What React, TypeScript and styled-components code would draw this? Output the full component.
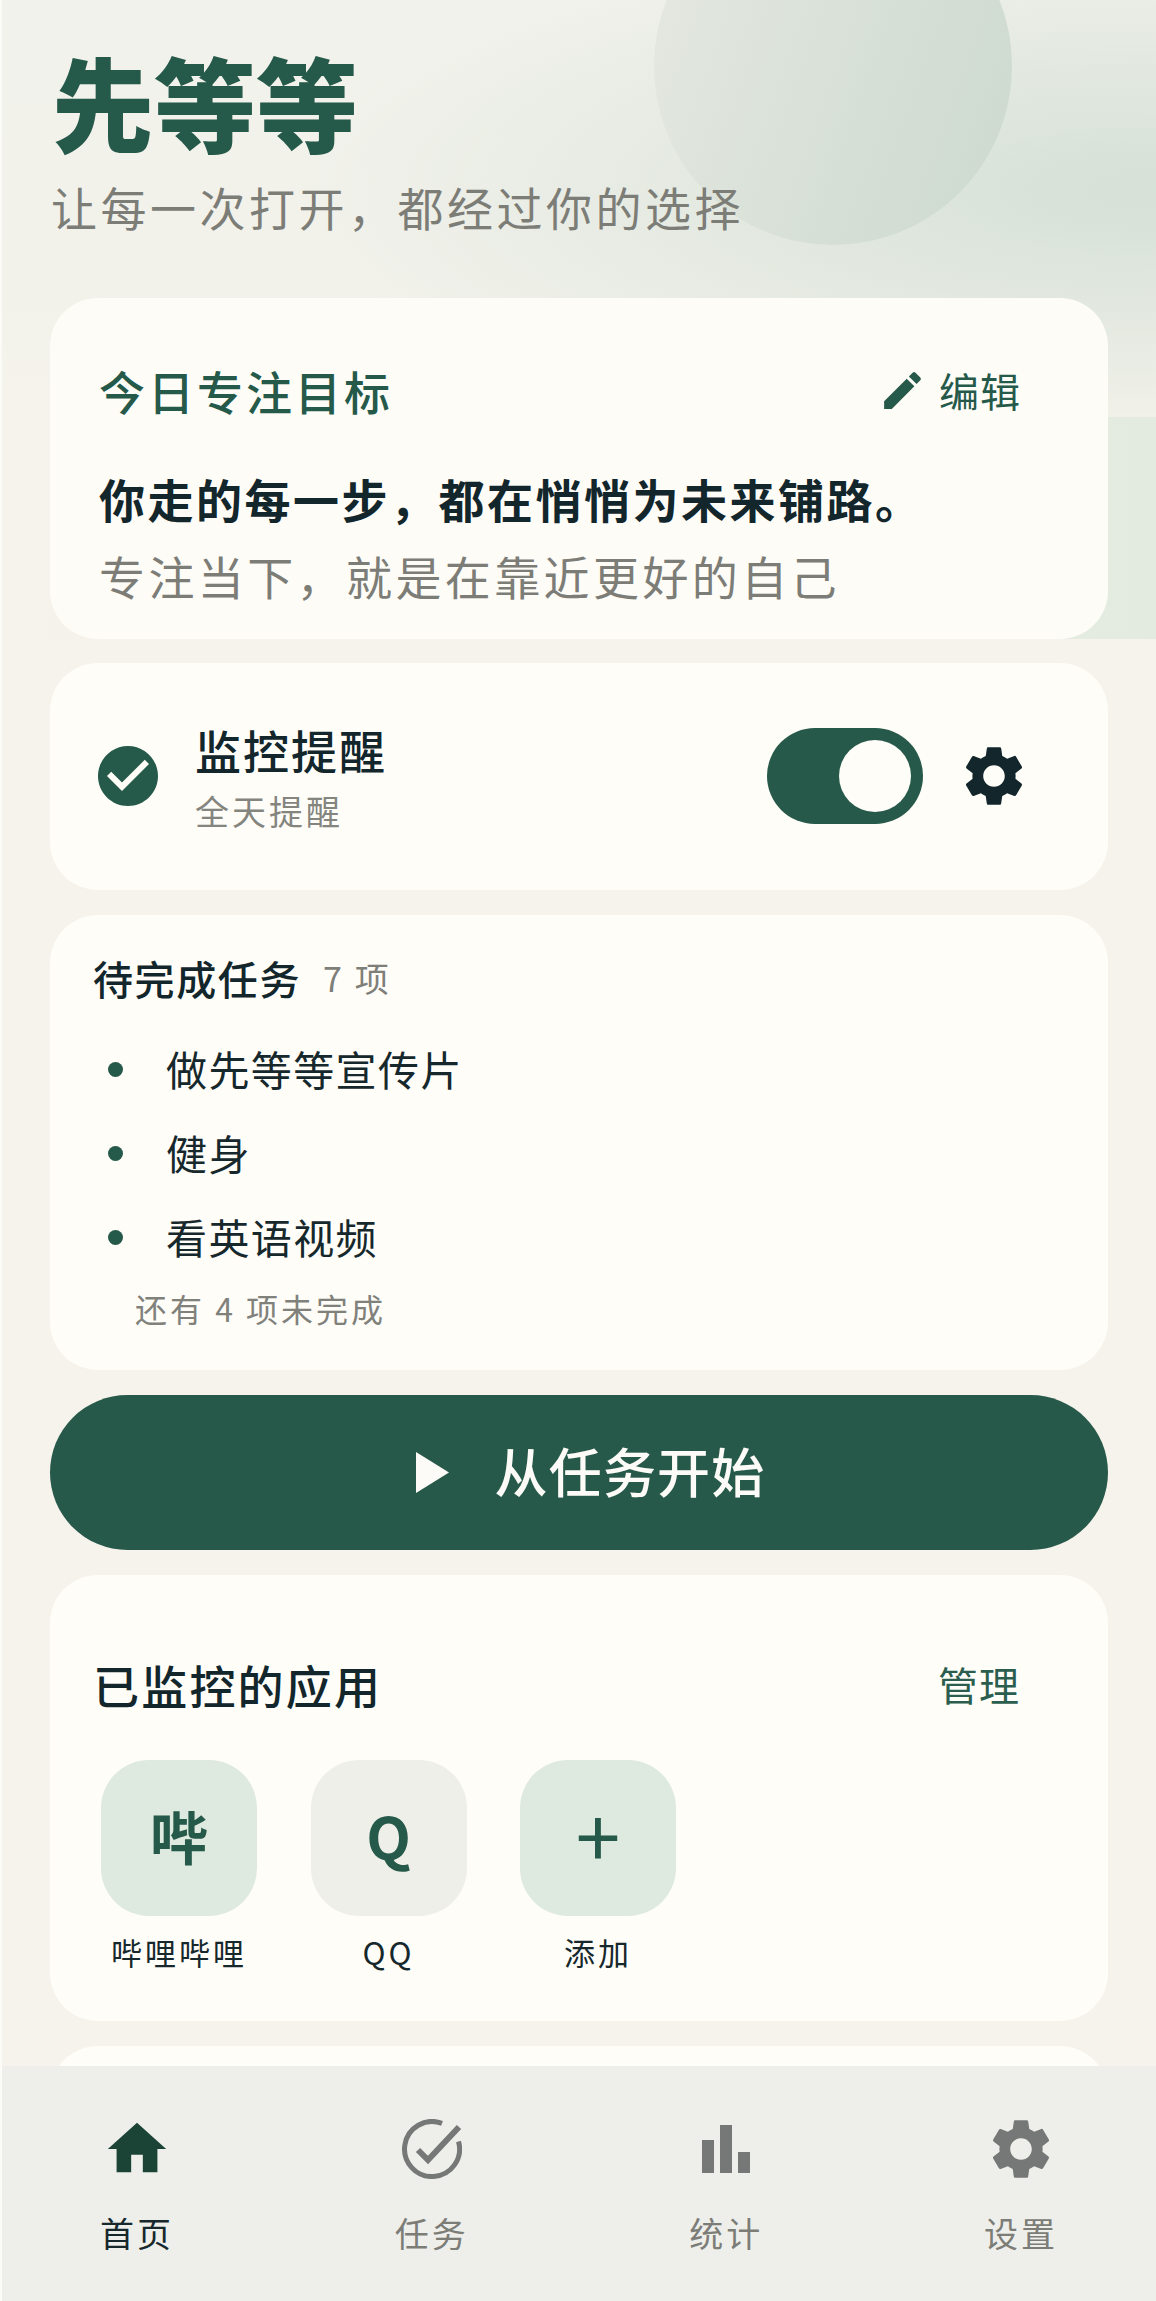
import styled, { createGlobalStyle } from "styled-components";
import { MdCheckCircle, MdEdit, MdHome, MdSettings } from "react-icons/md";

const GlobalStyle = createGlobalStyle`
    html, body {
        margin: 0;
        padding: 0;
        background: #f6f3ec;
    }
    * {
        box-sizing: border-box;
    }
`;

const Page = styled.div`
    position: relative;
    width: 1156px;
    height: 2301px;
    overflow: hidden;
    background: #f6f3ec;
    font-family: "Noto Sans CJK SC", "Noto Sans", sans-serif;
    color: #12262c;

    &::after {
        content: "";
        position: absolute;
        left: 0;
        top: 0;
        bottom: 0;
        width: 2px;
        background: #fbfbf8;
    }
`;

const Backdrop = styled.div`
    position: absolute;
    left: 0;
    top: 0;
    width: 100%;
    height: 639px;
    background:
        radial-gradient(ellipse 860px 260px at 100% 190px, #d5e0d6 0%, rgba(213, 224, 214, 0) 100%) 0 0 / 100% 417px no-repeat,
        linear-gradient(180deg, #f1f2eb 0%, #f2f2eb 70%, #f5f3ec 100%) 0 0 / 100% 417px no-repeat,
        linear-gradient(90deg, #f6f3ec 0%, #e3ebe1 100%) 0 417px / 100% 222px no-repeat;
`;

const Orb = styled.div`
    position: absolute;
    left: 654px;
    top: -113px;
    width: 358px;
    height: 358px;
    border-radius: 50%;
    background: linear-gradient(110deg, #e6e9e1 0%, #d6dfd6 60%, #ccd9cf 100%);
`;

const Content = styled.main`
    position: relative;
    padding: 51px 48px 0 50px;
`;

const Title = styled.h1`
    margin: 0 0 0 2px;
    font-size: 102px;
    line-height: 100px;
    font-weight: 900;
    color: #25594a;
`;

const Subtitle = styled.p`
    margin: 25px 0 62px 1px;
    font-size: 46px;
    line-height: 60px;
    letter-spacing: 3.5px;
    color: #7d7d78;
`;

const Card = styled.section`
    background: #fefdf8;
    border-radius: 48px;
    margin-bottom: 25px;
`;

const GoalCard = styled(Card)`
    background: #fdfcf7;
    padding: 67px 87px 34px 49px;
    margin-bottom: 24px;
`;

const SpacedRow = styled.div`
    display: flex;
    justify-content: space-between;
    align-items: center;
`;

const GoalTitle = styled.h2`
    margin: 0;
    font-size: 46px;
    line-height: 50px;
    letter-spacing: 3px;
    font-weight: 500;
    color: #25594a;
`;

const EditLink = styled.div`
    display: flex;
    align-items: center;
    gap: 12px;
    font-size: 40px;
    line-height: 50px;
    letter-spacing: 1px;
    color: #25594a;
`;

const Quote = styled.p`
    margin: 53px 0 0;
    font-size: 46px;
    line-height: 60px;
    letter-spacing: 2.5px;
    font-weight: 600;
    color: #12262c;
`;

const QuoteSub = styled.p`
    margin: 17px 0 0;
    font-size: 46px;
    line-height: 60px;
    letter-spacing: 3.4px;
    color: #7d7d78;
`;

const MonitorCard = styled(Card)`
    display: flex;
    align-items: flex-start;
    height: 227px;
    padding: 61px 78px 0 42px;
`;

const StatusIcon = styled.div`
    display: flex;
    margin-top: 16px;
    margin-right: 31px;
    color: #25594a;
`;

const MonitorText = styled.div`
    flex: 1;
`;

const MonitorTitle = styled.div`
    font-size: 46px;
    line-height: 50px;
    letter-spacing: 2px;
    font-weight: 500;
`;

const MonitorSub = styled.div`
    margin-top: 15px;
    font-size: 34px;
    line-height: 44px;
    letter-spacing: 3px;
    color: #85857f;
`;

const Toggle = styled.div`
    display: flex;
    justify-content: flex-end;
    align-items: center;
    width: 156px;
    height: 96px;
    margin-top: 4px;
    padding-right: 12px;
    border-radius: 48px;
    background: #27594a;
`;

const Knob = styled.div`
    width: 72px;
    height: 72px;
    border-radius: 50%;
    background: #fefdf8;
`;

const GearButton = styled.div`
    display: flex;
    margin-top: 16px;
    margin-left: 35px;
    color: #12262c;
`;

const TaskCard = styled(Card)`
    padding: 38px 44px 40px 43px;
`;

const TaskHead = styled.div`
    display: flex;
    align-items: center;
    gap: 22px;
`;

const TaskTitle = styled.h3`
    margin: 0;
    font-size: 40px;
    line-height: 50px;
    letter-spacing: 1.6px;
    font-weight: 500;
`;

const TaskCount = styled.span`
    font-size: 34px;
    line-height: 50px;
    letter-spacing: 2.6px;
    color: #7f7f7a;
`;

const TaskList = styled.ul`
    margin: 23px 0 0;
    padding: 0;
    list-style: none;
`;

const TaskRow = styled.li`
    display: flex;
    align-items: center;
    gap: 43px;
    height: 84px;
    padding-left: 15px;
    font-size: 41px;
    letter-spacing: 1.4px;
    color: #16282c;
`;

const Bullet = styled.span`
    width: 15px;
    height: 15px;
    margin-top: 2px;
    border-radius: 50%;
    background: #25594a;
`;

const TaskMore = styled.div`
    margin: 8px 0 0 42px;
    font-size: 32px;
    line-height: 44px;
    letter-spacing: 3px;
    color: #81817c;
`;

const StartButton = styled.button`
    display: flex;
    justify-content: center;
    align-items: center;
    gap: 46px;
    width: 100%;
    height: 155px;
    margin-bottom: 25px;
    padding: 0 0 0 23px;
    border: 0;
    border-radius: 78px;
    background: #27594a;
    font-family: inherit;
    font-size: 53px;
    letter-spacing: 1.2px;
    font-weight: 500;
    color: #fdfbf7;
`;

const StartLabel = styled.span`
    margin-bottom: 6px;
`;

const AppsCard = styled(Card)`
    padding: 81px 88px 47px 43px;
`;

const AppsTitle = styled.h3`
    margin: 0;
    font-size: 46px;
    line-height: 56px;
    letter-spacing: 2.2px;
    font-weight: 500;
`;

const ManageLink = styled.span`
    font-size: 40px;
    line-height: 56px;
    letter-spacing: 1px;
    color: #2b5e4e;
`;

const AppGrid = styled.div`
    display: flex;
    gap: 53.5px;
    margin: 48px 0 0 8px;
`;

const AppItem = styled.div`
    display: flex;
    flex-direction: column;
    align-items: center;
    width: 156px;
`;

const AppTile = styled.div<{ $muted?: boolean; $big?: boolean }>`
    display: flex;
    justify-content: center;
    align-items: center;
    width: 156px;
    height: 156px;
    padding-bottom: ${props => (props.$big ? "10px" : "7px")};
    border-radius: 48px;
    background: ${props => (props.$muted ? "#efefea" : "#dee9df")};
    font-size: ${props => (props.$big ? "80px" : "58px")};
    font-weight: ${props => (props.$big ? 400 : 700)};
    color: #25594a;
`;

const AppLabel = styled.div`
    margin-top: 14px;
    font-size: 31px;
    line-height: 44px;
    letter-spacing: 3px;
    color: #16282c;
    white-space: nowrap;
`;

const PeekCard = styled(Card)`
    height: 120px;
`;

const BottomNav = styled.nav`
    position: absolute;
    left: 0;
    right: 0;
    bottom: 0;
    display: flex;
    justify-content: space-between;
    height: 235px;
    padding: 48px 95px 0 97px;
    background: #eeefeb;
`;

const NavItem = styled.div<{ $active?: boolean }>`
    display: flex;
    flex-direction: column;
    align-items: center;
    width: 80px;
    color: ${props => (props.$active ? "#1c4436" : "#757876")};
`;

const NavIcon = styled.div`
    display: flex;
    justify-content: center;
    align-items: center;
    height: 70px;
`;

const NavLabel = styled.div<{ $active?: boolean }>`
    margin-top: 27px;
    font-size: 34px;
    line-height: 44px;
    letter-spacing: 3px;
    white-space: nowrap;
    color: ${props => (props.$active ? "#16282c" : "#7d7d78")};
`;

const tasks = ["做先等等宣传片", "健身", "看英语视频"];

function TaskIcon() {
    return (
        <svg width="60" height="60" viewBox="0 0 60 60" fill="none" stroke="currentColor">
            <path d="M40 4.4A27.5 27.5 0 1 0 56.5 22.5" strokeWidth="5" />
            <path d="M16 31l10 10L57 8" strokeWidth="6" />
        </svg>
    );
}

function StatsIcon() {
    return (
        <svg width="48" height="48" viewBox="0 0 48 48" fill="currentColor">
            <rect x="0" y="15" width="12" height="33" />
            <rect x="18" y="0" width="12" height="48" />
            <rect x="36" y="27" width="12" height="21" />
        </svg>
    );
}

function App() {
    return (
        <Page>
            <GlobalStyle />
            <Backdrop />
            <Orb />
            <Content>
                <Title>先等等</Title>
                <Subtitle>让每一次打开，都经过你的选择</Subtitle>

                <GoalCard>
                    <SpacedRow>
                        <GoalTitle>今日专注目标</GoalTitle>
                        <EditLink>
                            <MdEdit size={49} />
                            编辑
                        </EditLink>
                    </SpacedRow>
                    <Quote>你走的每一步，都在悄悄为未来铺路。</Quote>
                    <QuoteSub>专注当下，就是在靠近更好的自己</QuoteSub>
                </GoalCard>

                <MonitorCard>
                    <StatusIcon>
                        <MdCheckCircle size={72} />
                    </StatusIcon>
                    <MonitorText>
                        <MonitorTitle>监控提醒</MonitorTitle>
                        <MonitorSub>全天提醒</MonitorSub>
                    </MonitorText>
                    <Toggle>
                        <Knob />
                    </Toggle>
                    <GearButton>
                        <MdSettings size={72} />
                    </GearButton>
                </MonitorCard>

                <TaskCard>
                    <TaskHead>
                        <TaskTitle>待完成任务</TaskTitle>
                        <TaskCount>7 项</TaskCount>
                    </TaskHead>
                    <TaskList>
                        {tasks.map(task => (
                            <TaskRow key={task}>
                                <Bullet />
                                {task}
                            </TaskRow>
                        ))}
                    </TaskList>
                    <TaskMore>还有 4 项未完成</TaskMore>
                </TaskCard>

                <StartButton>
                    <svg width="33" height="41" viewBox="0 0 33 41" fill="currentColor">
                        <polygon points="0,0 33,20.5 0,41" />
                    </svg>
                    <StartLabel>从任务开始</StartLabel>
                </StartButton>

                <AppsCard>
                    <SpacedRow>
                        <AppsTitle>已监控的应用</AppsTitle>
                        <ManageLink>管理</ManageLink>
                    </SpacedRow>
                    <AppGrid>
                        <AppItem>
                            <AppTile>哔</AppTile>
                            <AppLabel>哔哩哔哩</AppLabel>
                        </AppItem>
                        <AppItem>
                            <AppTile $muted>Q</AppTile>
                            <AppLabel>QQ</AppLabel>
                        </AppItem>
                        <AppItem>
                            <AppTile $big>+</AppTile>
                            <AppLabel>添加</AppLabel>
                        </AppItem>
                    </AppGrid>
                </AppsCard>

                <PeekCard />
            </Content>

            <BottomNav>
                <NavItem $active>
                    <NavIcon>
                        <MdHome size={70} />
                    </NavIcon>
                    <NavLabel $active>首页</NavLabel>
                </NavItem>
                <NavItem>
                    <NavIcon>
                        <TaskIcon />
                    </NavIcon>
                    <NavLabel>任务</NavLabel>
                </NavItem>
                <NavItem>
                    <NavIcon>
                        <StatsIcon />
                    </NavIcon>
                    <NavLabel>统计</NavLabel>
                </NavItem>
                <NavItem>
                    <NavIcon>
                        <MdSettings size={72} />
                    </NavIcon>
                    <NavLabel>设置</NavLabel>
                </NavItem>
            </BottomNav>
        </Page>
    );
}

export default App;
